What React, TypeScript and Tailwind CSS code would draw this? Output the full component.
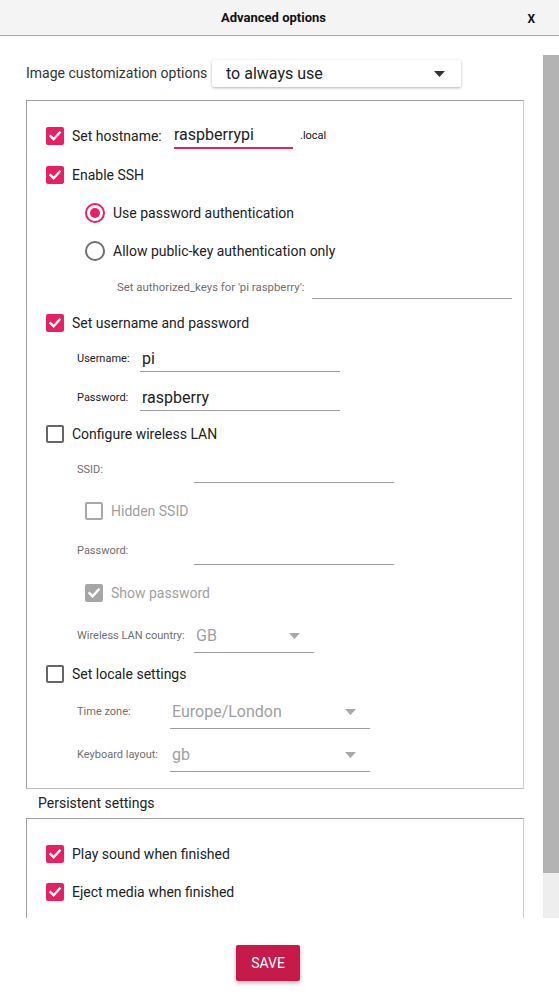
import React from 'react'

function Check({ checked, disabled }: { checked?: boolean; disabled?: boolean }) {
  if (checked) {
    return (
      <div className={`flex h-[18px] w-[18px] shrink-0 items-center justify-center rounded-[2px] ${disabled ? 'bg-[#a6a6a6]' : 'bg-[#e91e63]'}`}>
        <svg width="14" height="14" viewBox="0 0 14 14">
          <path d="M2.5 7.2 L5.6 10.2 L11.6 3.6" fill="none" stroke="white" strokeWidth="2.4" strokeLinecap="square" />
        </svg>
      </div>
    )
  }
  return (
    <div className={`h-[18px] w-[18px] shrink-0 rounded-[2px] border-2 ${disabled ? 'border-[#a8a8a8]' : 'border-[#666]'}`} />
  )
}

function Radio({ checked }: { checked?: boolean }) {
  return (
    <div className={`flex h-[20px] w-[20px] shrink-0 items-center justify-center rounded-full border-2 ${checked ? 'border-[#e91e63]' : 'border-[#707070]'}`}>
      {checked && <div className="h-[10px] w-[10px] rounded-full bg-[#e91e63]" />}
    </div>
  )
}

function Arrow({ color }: { color: string }) {
  return (
    <svg width="11" height="6" viewBox="0 0 11 6" className="shrink-0">
      <path d="M0 0 L11 0 L5.5 6 Z" fill={color} />
    </svg>
  )
}

function CheckRow({ label, checked, disabled, indent, mt }: { label: string; checked?: boolean; disabled?: boolean; indent?: boolean; mt: string }) {
  return (
    <div className={`flex h-[32px] items-center gap-2 ${indent ? 'pl-[58px]' : 'pl-[19px]'} ${mt}`}>
      <Check checked={checked} disabled={disabled} />
      <span className={`whitespace-nowrap text-[14px] ${disabled ? 'text-[#a0a0a0]' : 'text-[#222]'}`}>{label}</span>
    </div>
  )
}

function FieldRow({
  label,
  labelW,
  fieldW,
  value,
  mt,
  fieldH = 'h-[26px]',
  muted,
  select,
}: {
  label: string
  labelW: string
  fieldW: string
  value?: string
  mt: string
  fieldH?: string
  muted?: boolean
  select?: boolean
}) {
  return (
    <div className={`flex h-[32px] items-center pl-[50px] ${mt}`}>
      <span className={`${labelW} shrink-0 whitespace-nowrap text-[11px] ${muted ? 'text-[#6f6f6f]' : 'text-[#222]'}`}>{label}</span>
      <div className={`${fieldW} ${fieldH} flex shrink-0 items-center justify-between border-b border-[#9e9e9e] pl-[2px] pr-[14px]`}>
        <span className={`text-[16px] ${select ? 'text-[#a0a0a0]' : 'text-[#222]'}`}>{value}</span>
        {select && <Arrow color="#a8a8a8" />}
      </div>
    </div>
  )
}

export default function App() {
  return (
    <div className="flex h-[997px] w-[559px] flex-col overflow-hidden bg-white font-['Roboto',sans-serif] text-[#222]">
      <header className="relative flex h-[36px] shrink-0 items-center justify-center border-b border-[#a9a9a9] bg-[#f4f4f4] pr-[12px]">
        <span className="text-[13px] font-bold text-[#111]">Advanced options</span>
        <span className="absolute right-[24px] top-[10px] text-[12px] font-bold text-[#111]">X</span>
      </header>

      <div className="flex h-[882px] shrink-0">
        <div className="w-[543px] overflow-hidden">
          <div className="mt-[24px] flex h-[27px] items-center pl-[26px]">
            <span className="w-[186px] whitespace-nowrap text-[14px] text-[#333]">Image customization options</span>
            <div className="flex h-[27px] w-[249px] items-center justify-between rounded-[2px] bg-white pl-[14px] pr-[16px] shadow-[0_1px_3px_rgba(0,0,0,0.3)]">
              <span className="text-[16px] text-[#222]">to always use</span>
              <Arrow color="#333" />
            </div>
          </div>

          <div className="ml-[26px] mt-[13px] h-[689px] w-[498px] border border-t-[#a0a0a0] border-l-[#a0a0a0] border-r-[#cfcfcf] border-b-[#bdbdbd] pt-[19px]">
            <div className="flex h-[32px] items-center gap-2 pl-[19px]">
              <Check checked />
              <span className="w-[94px] shrink-0 whitespace-nowrap text-[14px]">Set hostname:</span>
              <div className="flex h-[26px] w-[119px] shrink-0 items-center border-b-2 border-[#e91e63]">
                <span className="text-[16px]">raspberrypi</span>
              </div>
              <span className="-ml-[1px] text-[11px] text-[#111]">.local</span>
            </div>
            <CheckRow label="Enable SSH" checked mt="mt-[7px]" />
            <div className="mt-[6px] flex h-[32px] items-center gap-2 pl-[58px]">
              <Radio checked />
              <span className="text-[14px]">Use password authentication</span>
            </div>
            <div className="mt-[6px] flex h-[32px] items-center gap-2 pl-[58px]">
              <Radio />
              <span className="text-[14px]">Allow public-key authentication only</span>
            </div>
            <div className="mt-[5px] flex h-[32px] items-center pl-[90px]">
              <span className="w-[195px] shrink-0 whitespace-nowrap text-[11.4px] text-[#6f6f6f]">Set authorized_keys for 'pi raspberry':</span>
              <div className="h-[22px] w-[200px] shrink-0 border-b border-[#9e9e9e]" />
            </div>
            <CheckRow label="Set username and password" checked mt="mt-[3px]" />
            <FieldRow label="Username:" labelW="w-[63px]" fieldW="w-[200px]" value="pi" mt="mt-[4px]" />
            <FieldRow label="Password:" labelW="w-[63px]" fieldW="w-[200px]" value="raspberry" mt="mt-[7px]" />
            <CheckRow label="Configure wireless LAN" mt="mt-[4px]" />
            <FieldRow label="SSID:" labelW="w-[117px]" fieldW="w-[200px]" mt="mt-[4px]" muted />
            <CheckRow label="Hidden SSID" disabled indent mt="mt-[9px]" />
            <FieldRow label="Password:" labelW="w-[117px]" fieldW="w-[200px]" mt="mt-[8px]" fieldH="h-[28px]" muted />
            <CheckRow label="Show password" checked disabled indent mt="mt-[10px]" />
            <FieldRow label="Wireless LAN country:" labelW="w-[117px]" fieldW="w-[120px]" value="GB" mt="mt-[11px]" fieldH="h-[34px]" muted select />
            <CheckRow label="Set locale settings" mt="mt-[6px]" />
            <FieldRow label="Time zone:" labelW="w-[93px]" fieldW="w-[200px]" value="Europe/London" mt="mt-[6px]" fieldH="h-[34px]" muted select />
            <FieldRow label="Keyboard layout:" labelW="w-[93px]" fieldW="w-[200px]" value="gb" mt="mt-[11px]" fieldH="h-[34px]" muted select />
          </div>

          <div className="flex h-[29px] items-center pl-[38px]">
            <span className="text-[14px] text-[#222]">Persistent settings</span>
          </div>

          <div className="ml-[26px] h-[150px] w-[498px] border border-t-[#a0a0a0] border-l-[#a0a0a0] border-r-[#cfcfcf] border-b-[#bdbdbd] pt-[19px]">
            <CheckRow label="Play sound when finished" checked mt="mt-0" />
            <CheckRow label="Eject media when finished" checked mt="mt-[6px]" />
          </div>
        </div>

        <div className="w-[16px] pt-[19px]">
          <div className="flex h-full flex-col bg-[#eeeeee]">
            <div className="h-[818px] bg-[#b3b3b3]" />
          </div>
        </div>
      </div>

      <div className="flex flex-1 justify-center pr-[23px] pt-[27px]">
        <button className="h-[36px] w-[64px] rounded-[2px] bg-[#c51a4a] text-[14px] text-white shadow-[0_2px_4px_rgba(0,0,0,0.3)]">
          SAVE
        </button>
      </div>
    </div>
  )
}
